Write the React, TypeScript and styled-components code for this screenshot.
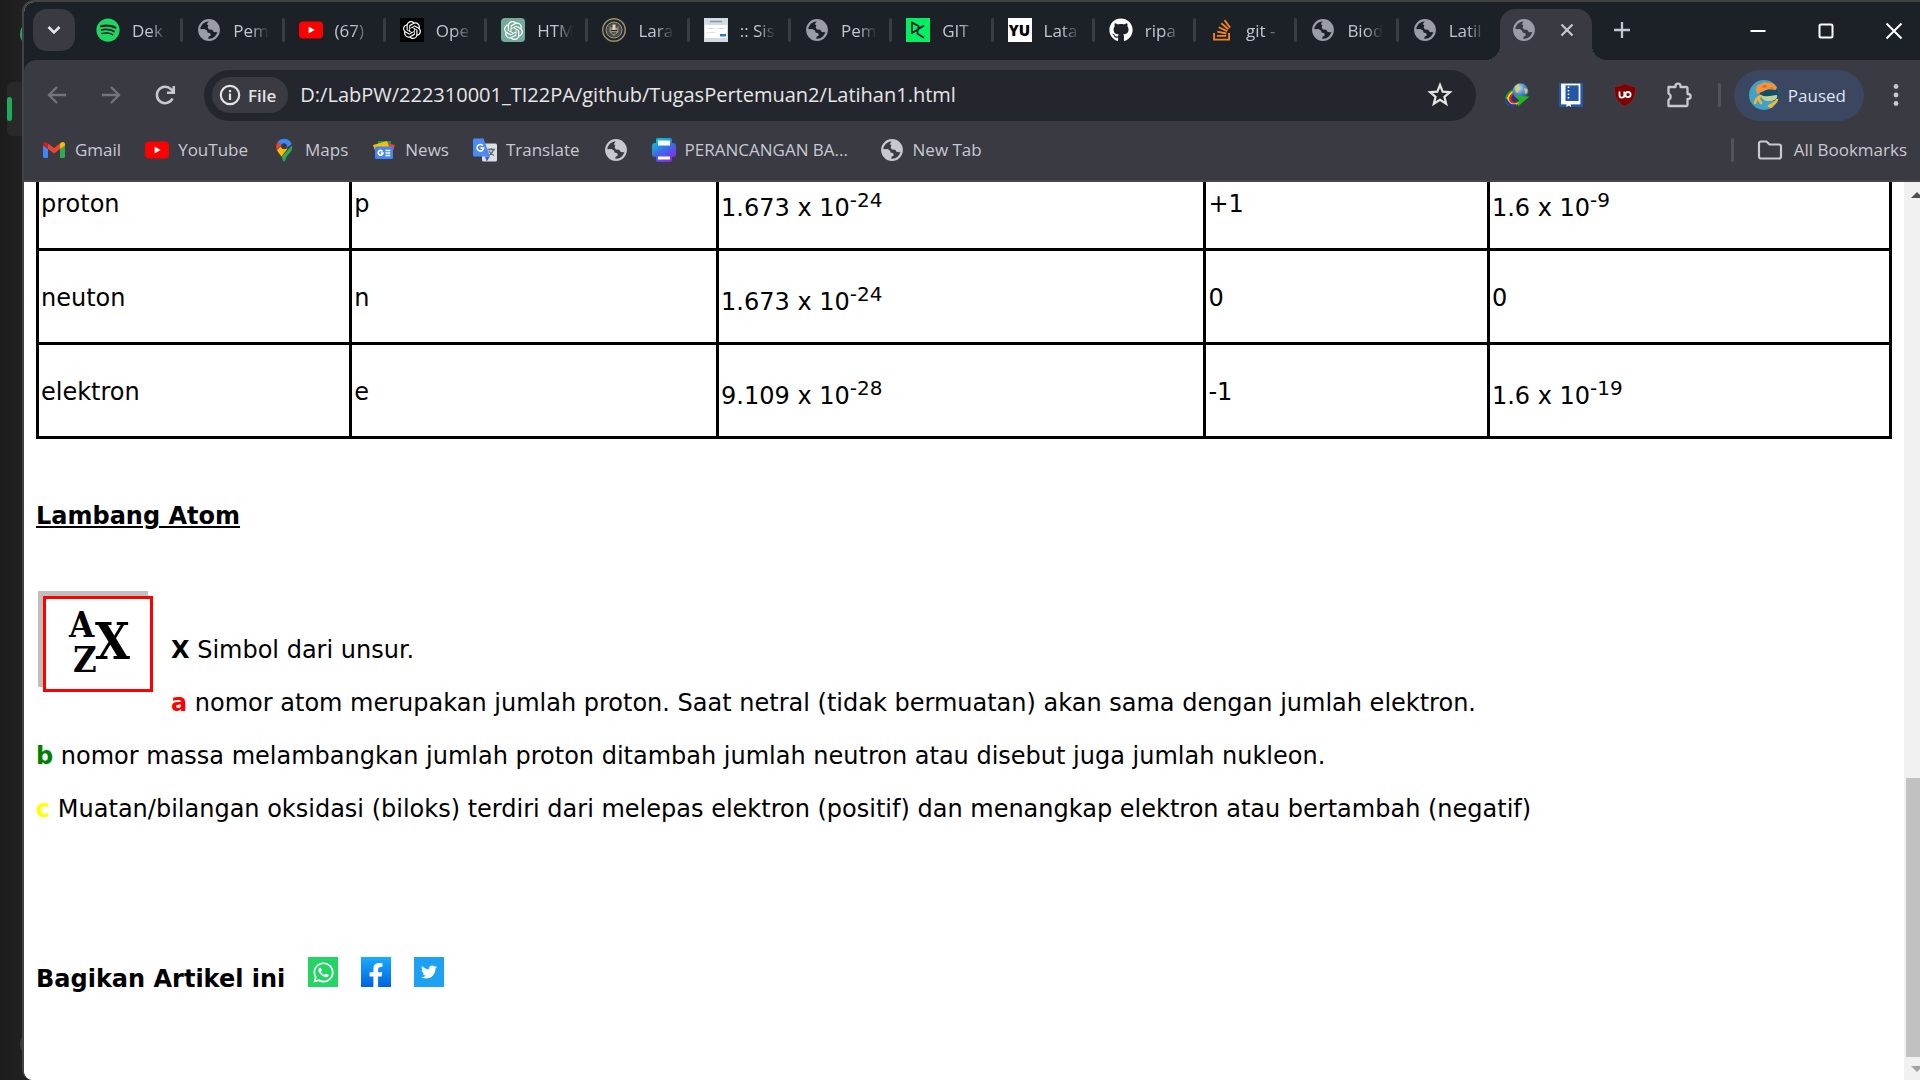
import React from "react";
import styled, { createGlobalStyle } from "styled-components";
import { FaSpotify, FaGithub, FaStackOverflow, FaWhatsapp, FaFacebookF, FaTwitter } from "react-icons/fa";
import { SiOpenai } from "react-icons/si";

const Global = createGlobalStyle`
  * { box-sizing: border-box; }
  html, body, #root { height: 100%; margin: 0; }
  body { overflow: hidden; background: #1e1e1e; }
  button { border: 0; padding: 0; background: none; color: inherit; font: inherit; display: flex; align-items: center; justify-content: center; }
  a { color: inherit; text-decoration: none; }
  svg { display: block; flex: none; }
`;

const ui = `"Segoe UI", "Open Sans", "Noto Sans", sans-serif`;
const text = `Verdana, "DejaVu Sans", sans-serif`;

const Desktop = styled.div`position: relative; display: flex; height: 100vh; padding-left: 22px; background: linear-gradient(90deg, #1c1c1c, #212121 22px); overflow: hidden;`;
const BehindPanel = styled.div`position: absolute; left: 7px; top: 82px; width: 40px; height: 54px; border-radius: 6px; background: #292929; display: flex; align-items: center;`;
const BehindMark = styled.div`width: 5px; height: 24px; border-radius: 3px; background: #1fab5c;`;
const BehindDot = styled.div<{ $top: number; $color: string }>`position: absolute; left: 20px; top: ${p => p.$top}px; width: 26px; height: 26px; border-radius: 50%; background: ${p => p.$color};`;

const Window = styled.div`position: relative; flex: 1; min-width: 0; display: flex; flex-direction: column; border: 2px solid #434343; border-right: 0; border-bottom: 0; border-radius: 12px 0 0 10px; overflow: hidden; background: #fff; font-family: ${ui};`;

const TabStrip = styled.div`flex: none; display: flex; align-items: flex-start; height: 58px; padding: 7px 0 0 9px; background: #1c2027; color: #c3c6cf;`;
const SearchTabs = styled.button`&& { width: 42px; height: 42px; border-radius: 14px; background: #393a42; margin-right: 7px; color: #e6e6ea; }`;
const TabList = styled.div`flex: 0 1 1418px; min-width: 0; display: flex;`;
const Tab = styled.button`&& { flex: 1 1 0; min-width: 0; height: 42px; padding-left: 14px; justify-content: flex-start; gap: 12px; font-size: 17px; line-height: 24px; }`;
const TabTitle = styled.span`flex: 1; text-align: left; white-space: nowrap; overflow: hidden; padding-top: 2px; mask-image: linear-gradient(90deg, #000 18px, transparent 36px);`;
const TabRule = styled.span<{ $hide?: boolean }>`width: 3px; height: 24px; border-radius: 2px; background: ${p => (p.$hide ? "transparent" : "#393c43")};`;
const ActiveTab = styled.div`position: relative; flex: none; width: 92px; height: 51px; padding: 0 18px 9px 12px; display: flex; align-items: center; justify-content: space-between; border-radius: 15px 15px 0 0; background: #393a42;
  &::before, &::after { content: ""; position: absolute; bottom: 0; width: 15px; height: 15px; }
  &::before { left: -15px; background: radial-gradient(circle at 0 0, transparent 15px, #393a42 15px); }
  &::after { right: -15px; background: radial-gradient(circle at 100% 0, transparent 15px, #393a42 15px); }`;
const NewTab = styled.button`&& { width: 42px; height: 42px; margin-left: 9px; }`;
const Controls = styled.div`margin-left: auto; display: flex; color: #fff;`;
const Control = styled.button`&& { width: 68px; height: 44px; &:last-child { width: 60px; padding-left: 8px; } }`;

const Toolbar = styled.div`flex: none; display: flex; align-items: center; height: 70px; padding: 0 3px 0 6px; background: #393a42; border-radius: 12px 0 0 0; color: #c7c9d1;`;
const ToolbarBack = styled.div`flex: none; background: #1c2027;`;
const NavButton = styled.button<{ $dim?: boolean }>`&& { width: 54px; height: 42px; color: ${p => (p.$dim ? "#74757c" : "#c7c9d1")}; &:nth-child(3) { margin-right: 12px; } }`;
const Omnibox = styled.div`flex: 1; min-width: 0; display: flex; align-items: center; height: 51px; padding: 0 23px 0 8px; border-radius: 26px; background: #24262d; color: #e3e3e3;`;
const Chip = styled.button`&& { height: 36px; padding: 0 12px 0 6px; gap: 6px; border-radius: 18px; background: #393a42; font-size: 17px; font-weight: 600; margin-right: 12px; }`;
const Url = styled.input`flex: 1; min-width: 0; border: 0; outline: 0; padding: 0; background: none; color: #e6e6e6; font: 20px/28px ${ui};`;
const Extensions = styled.div`display: flex; align-items: center; padding-left: 14px;`;
const Extension = styled.button`&& { width: 54px; height: 42px; }`;
const Rule = styled.span<{ $left: number; $right: number }>`width: 3px; height: 24px; border-radius: 2px; background: #52545c; margin: 0 ${p => p.$right}px 0 ${p => p.$left}px;`;
const Profile = styled.button`&& { height: 51px; padding: 0 18px 0 15px; gap: 9px; border-radius: 26px; background: #3b4660; color: #dfe3f0; font-size: 17px; }`;
const Menu = styled.button`&& { width: 42px; height: 42px; margin-left: 11px; }`;

const Bookmarks = styled.nav`flex: none; display: flex; align-items: center; gap: 24px; height: 52px; padding: 0 13px 10px 18px; border-bottom: 2px solid #474747; background: #393a42; color: #c7c9d1; font-size: 17px; line-height: 24px;`;
const Bookmark = styled.a<{ $long?: boolean }>`display: flex; align-items: center; gap: 9px; white-space: nowrap; min-width: ${p => (p.$long ? 204 : 0)}px;`;
const AllBookmarks = styled.div`margin-left: auto; display: flex; align-items: center;`;

const Viewport = styled.div`flex: 1; min-height: 0; display: flex;`;
const Page = styled.main`flex: 1; min-width: 0; padding: 0 12px; overflow: hidden; background: #fff; color: #000; font: 24px/29px ${text};`;
const ScrollTrack = styled.div`flex: 0 0 16px; overflow: hidden; display: flex; flex-direction: column; padding: 10px 0 8px 2px; background: #f1f1f1;`;
const ScrollSpace = styled.div`flex: 1;`;
const ScrollThumb = styled.div`height: 279px; margin-bottom: 9px; background: #c1c1c1;`;

const DataTable = styled.table`width: 100%; margin-top: -28px; border-collapse: collapse; table-layout: fixed;`;
const Cell = styled.td`height: 94px; padding: 4px 2px 0; border: 3px solid #000; vertical-align: middle;
  sup { font-size: 20px; line-height: 26px; }`;
const Col = styled.col<{ $share: number }>`width: ${p => p.$share}%;`;
const Heading = styled.h3`margin: 63px 0 0; font-size: 24px; line-height: 29px; text-decoration: underline;`;
const Formula = styled.figure`float: left; width: 110px; height: 96px; margin: 65px 18px 0 7px; border: 3px solid #fe0000; background: #fff; box-shadow: -5px -5px 0 #bfbfbf;`;
const Lines = styled.section`p { margin: 0 0 24px; } p:first-of-type { padding-top: 105px; }`;
const Key = styled.b<{ $color: string }>`color: ${p => p.$color};`;
const Share = styled.footer`display: flex; align-items: flex-end; gap: 23px; padding-top: 109px; font-weight: bold;`;
const ShareLabel = styled.span`line-height: 29px; margin-bottom: -7px;`;
const ShareLink = styled.a<{ $bg: string }>`display: flex; align-items: center; justify-content: center; width: 30px; height: 30px; background: ${p => p.$bg}; color: #fff;`;
const FbMark = styled(FaFacebookF)`align-self: flex-end;`;

const Box = styled.span<{ $bg: string; $r?: number }>`flex: none; display: flex; align-items: center; justify-content: center; width: 24px; height: 24px; background: ${p => p.$bg}; border-radius: ${p => p.$r || 0}px; color: #fff;`;
const YuBox = styled(Box)`color: #000; font: 900 15px/24px "Open Sans", sans-serif;`;

const Globe = ({ color = "#9a9da6" }: { color?: string }) => (
  <svg width="24" height="24" viewBox="0 0 24 24">
    <circle cx="12" cy="12" r="9.8" fill="none" stroke={color} strokeWidth="2.2" />
    <path fill={color} d="M12.5 2 17 3.5l4.5 5 .5 4.5-2.2 1.2-3-.2-1.6-2.2-3.2-.4-1.400-2 .8-2.200-1.600-.9 1.300-2.200zM2 11.200l5.400-.2 2.600 1.400.6 2 2.600.8.6 2.200-2.200 1.400-.6 3-3.600-.2L3 17.400z" />
  </svg>
);
const YouTubeIcon = () => (
  <svg width="24" height="24" viewBox="0 0 24 24"><rect x="0" y="3.500" width="24" height="17" rx="4" fill="#f00" /><path d="M9.600 8.600v6.800l6-3.400z" fill="#fff" /></svg>
);
const SpotifyIcon = styled(FaSpotify)`color: #1ed760;`;
const StackIcon = styled(FaStackOverflow)`color: #f48024;`;
const GithubIcon = styled(FaGithub)`color: #fff;`;
const Crest = () => (
  <svg width="24" height="24" viewBox="0 0 24 24"><circle cx="12" cy="12" r="11.300" fill="#1a2a3c" stroke="#a58c5c" strokeWidth="1.400" /><circle cx="12" cy="12" r="8" fill="#4b4a45" stroke="#a99768" /><path d="M7.500 7.500 9 9.500l6 .2 1.500-2.200V14L12 18l-4.500-4z" fill="#8f8b80" /><path d="M10.500 6.500h3v6h-3z" fill="#d8d3c5" /><path stroke="#24241f" strokeWidth="1.200" d="M9 12.500h6M10 15h4" /></svg>
);
const FormIcon = () => (
  <svg width="24" height="24" viewBox="0 0 24 24"><path fill="#d5dbe5" d="M0 0h24v24H0z" /><path fill="#fff" d="M1 7h22v13H1z" /><path stroke="#8f959d" strokeWidth="1.500" d="M6 3.500h12" /><path stroke="#dde1e6" d="M3 10.500h8M13 10.500h8M3 14.500h8" /><path fill="#2a7ab8" d="M16 16h6v2.500h-6z" /></svg>
);
const DcIcon = () => (
  <svg width="24" height="24" viewBox="0 0 24 24"><path fill="#03ef62" d="M0 0h24v24H0z" /><path fill="none" stroke="#05192d" strokeWidth="1.700" d="M6 16V4.500l6.500 3.600v3.200L6 15M18 7.500l-6.500 4v4.200l6.500 4M11.500 12.500l1-1.500" /></svg>
);
const GmailIcon = () => (
  <svg width="24" height="24" viewBox="0 0 24 24"><path fill="#4285f4" d="M1 7v11.500C1 19.300 1.700 20 2.500 20H6V11z" /><path fill="#34a853" d="M23 7v11.500c0 .8-.7 1.500-1.500 1.500H18V11z" /><path fill="#ea4335" d="M6 5.500 12 10l6-4.500V11l-6 4.600L6 11z" /><path fill="#c5221f" d="M1 6.500C1 4 3.600 3.600 5 4.700l1 .8V11L1 7.400z" /><path fill="#fbbc04" d="M23 6.500c0-2.500-2.600-2.900-4-1.800l-1 .8V11l5-3.600z" /></svg>
);
const MapsIcon = () => (
  <svg width="24" height="24" viewBox="0 0 24 24"><path fill="#34a853" d="M20 7.500c.8 5.500-2.500 7.500-5 10.700-1.600 2-1.700 5.300-3 5.300-1.200 0-1.200-3-2.400-4.700z" /><path fill="#fbbc04" d="m5 12 4-3.500 6.500 2.300-6 7.700C8 16.400 6 14.700 5 12z" /><path fill="#ea4335" d="M6 3.500 10 7l-5 5.500C3.500 9 4 6 6 3.500z" /><path fill="#4285f4" d="M6 3.400C9.500-.8 17.500-.2 19.700 6L14 10.500 9 8z" /><circle cx="12" cy="8.200" r="3" fill="#393a42" /></svg>
);
const NewsIcon = () => (
  <svg width="24" height="24" viewBox="0 0 24 24"><path fill="#0c9d58" d="M6 3h13v9H6z" /><path fill="#ea4335" d="m15 5 8 2-3 9-7-4z" /><path fill="#fbbc04" d="m1 7 14-4 3 8-13 7z" /><rect x="3" y="8.500" width="18" height="12.500" rx="1.500" fill="#4285f4" /><path fill="none" stroke="#fff" strokeWidth="1.700" d="M10.600 13.400a2.400 2.400 0 1 0 .4 1.800H8.800M13.500 12.500h4.800M13.500 15h4.800M13.500 17.500h4.800" /></svg>
);
const TranslateIcon = () => (
  <svg width="24" height="24" viewBox="0 0 24 24"><rect x="9" y="5.500" width="15" height="18" rx="1.500" fill="#dcdee0" /><path fill="none" stroke="#5f6b73" strokeWidth="1.300" d="M14.500 11.500h7.500M18.200 10v1.500M20.600 11.500c-.7 3-2.600 4.600-4.600 6M16 13c1 2.200 2.800 3.700 5 4.500" /><path fill="#3a5bc7" d="m12 18.500 5 0-3.400 5z" /><path fill="#4c8bf5" d="M1.500.500h9L17 18.500H1.500A1.500 1.500 0 0 1 0 17V2A1.500 1.500 0 0 1 1.500.500z" /><path fill="none" stroke="#fff" strokeWidth="1.600" d="M9.800 7.600a3.300 3.300 0 1 0 .8 2.500H7.500" /></svg>
);
const PrinterIcon = () => (
  <svg width="24" height="24" viewBox="0 0 24 24"><defs><linearGradient id="pr" x1="0.200" y1="0" x2="0.800" y2="1"><stop offset="0" stopColor="#00d0cd" /><stop offset=".5" stopColor="#3f68ea" /><stop offset="1" stopColor="#8a24e8" /></linearGradient></defs><path fill="url(#pr)" d="M6 0h12a2 2 0 0 1 2 2v3h1a3 3 0 0 1 3 3v8a3 3 0 0 1-3 3h-1v3a2 2 0 0 1-2 2H6a2 2 0 0 1-2-2v-3H3a3 3 0 0 1-3-3V8a3 3 0 0 1 3-3h1V2a2 2 0 0 1 2-2z" /><path fill="#fff" d="M6 2.500h12v5H6zM6 18.500h12v3H6z" /></svg>
);
const FolderIcon = () => (
  <svg width="28" height="24" viewBox="0 0 28 24" fill="none" stroke="#c7c9d1" strokeWidth="2.200"><path d="M2 5.500A2 2 0 0 1 4 3.500h5.500l3 3H22a2 2 0 0 1 2 2v10a2 2 0 0 1-2 2H4a2 2 0 0 1-2-2z" /></svg>
);
const IdmIcon = () => (
  <svg width="26" height="24" viewBox="0 0 26 24">
    <defs><radialGradient id="ball" cx=".4" cy=".3" r=".8"><stop offset="0" stopColor="#b8dcf8" /><stop offset=".5" stopColor="#4a86d0" /><stop offset="1" stopColor="#1c3f86" /></radialGradient></defs>
    <g transform="rotate(-35 11 13)"><ellipse cx="10" cy="14" rx="10.500" ry="8" fill="#2a9b1e" /><ellipse cx="10.500" cy="14.300" rx="9" ry="6.800" fill="#f2d21c" /><ellipse cx="11" cy="14.500" rx="7.500" ry="5.600" fill="#e02b1b" /><ellipse cx="11.500" cy="15" rx="5.800" ry="4.300" fill="#2b2f8c" /></g>
    <path d="M2 16c1 5 6 7.500 10 6" fill="none" stroke="#1c35c4" strokeWidth="2.400" />
    <circle cx="16.500" cy="8.300" r="8" fill="url(#ball)" /><path fill="#d9d35e" opacity=".9" d="M10.500 5c1-2.600 3-4 5-4.200l-.6 3 1.600 2-3.500 4.500zM20 5l3.500 1v4l-2.500 1z" />
    <path fill="#25b51e" d="m10 12.500 15.500 1L14 23.500l.8-6.500z" />
  </svg>
);
const BookIcon = () => (
  <svg width="24" height="24" viewBox="0 0 24 24"><path fill="#2457a5" d="M0 0h24v24H0z" /><rect x="3" y="1.500" width="17.500" height="19" fill="none" stroke="#fff" strokeWidth="1.800" /><path fill="#fff" d="M3 2h3.500v18H3zM3 18h17v2H3zM7.500 19h4.500v5l-2.200-1.600L7.500 24z" /><path stroke="#fff" strokeWidth="1.600" strokeDasharray="1.500 2" d="M9.500 3.500v12" /></svg>
);
const UblockIcon = () => (
  <svg width="24" height="24" viewBox="0 0 24 24"><path fill="#800000" stroke="#6e3f46" strokeWidth=".6" d="M12 .500c3 2 7 3 10.500 3 .3 9-1 14.500-10.500 20C2.500 18 1.200 12.500 1.500 3.500 5 3.500 9 2.500 12 .500z" /><path fill="none" stroke="#fff" strokeWidth="1.800" d="M6.500 8.500v3.700a2.300 2.300 0 0 0 4.800 0V8.500" /><circle cx="15" cy="11.600" r="2.600" fill="none" stroke="#fff" strokeWidth="1.800" /></svg>
);
const PuzzleIcon = () => (
  <svg width="26" height="26" viewBox="0 0 26 26"><path fill="none" stroke="#c7c9d1" strokeWidth="2.300" strokeLinejoin="round" d="M2.500 5h7V4.200a2.500 2.500 0 0 1 5 0V5h5.500a1.500 1.500 0 0 1 1.500 1.500V12h.7a2.300 2.300 0 0 1 0 4.800h-.7v5.700a1.500 1.500 0 0 1-1.500 1.500H2.500v-6.200a3.400 3.400 0 0 0 0-6.300z" /></svg>
);
const FrogAvatar = () => (
  <svg width="30" height="30" viewBox="0 0 30 30"><clipPath id="av"><circle cx="15" cy="15" r="15" /></clipPath><g clipPath="url(#av)"><path fill="#3fa3c8" d="M0 0h30v30H0z" /><path fill="#12506a" d="M10 11l20-3v12l-6 1-12-4z" /><path fill="#f5923a" d="M7 10c0-4 3-6 5-6 2-2 5-2 6-1 4-1 7 0 10 3l-1 4-8-1-6 3-5 2z" /><path fill="#e8623a" d="M13 6l4-1 1 2-4 1zM21 7l4 1-3 1z" /><path fill="#c7cf98" d="M12 15c6 3 11 0 16 0 1 4-3 6-8 6-4 0-8-2-8-6z" /><path fill="none" stroke="#f7b43a" strokeWidth="2.600" strokeLinecap="round" d="M12 16c-3 1-5 3-6 7M9 18l3 5M28 20c-1 3-4 4-8 6M25 23l-3 4" /></g></svg>
);

const tabs: { title: string; icon: React.ReactNode }[] = [
  { title: "Dek", icon: <SpotifyIcon size={24} /> },
  { title: "Pem", icon: <Globe /> },
  { title: "(67)", icon: <YouTubeIcon /> },
  { title: "Ope", icon: <Box $bg="#000"><SiOpenai size={18} /></Box> },
  { title: "HTM", icon: <Box $bg="#75a99b" $r={4}><SiOpenai size={19} /></Box> },
  { title: "Lara", icon: <Crest /> },
  { title: ":: Sis", icon: <FormIcon /> },
  { title: "Pem", icon: <Globe /> },
  { title: "GIT", icon: <DcIcon /> },
  { title: "Lata", icon: <YuBox $bg="#fff">YU</YuBox> },
  { title: "ripa", icon: <GithubIcon size={24} /> },
  { title: "git -", icon: <StackIcon size={24} /> },
  { title: "Biod", icon: <Globe /> },
  { title: "Latil", icon: <Globe /> },
];

const bookmarks: { title: string; icon: React.ReactNode; long?: boolean }[] = [
  { title: "Gmail", icon: <GmailIcon /> },
  { title: "YouTube", icon: <YouTubeIcon /> },
  { title: "Maps", icon: <MapsIcon /> },
  { title: "News", icon: <NewsIcon /> },
  { title: "Translate", icon: <TranslateIcon /> },
  { title: "", icon: <Globe color="#c7c9d1" /> },
  { title: "PERANCANGAN BA...", icon: <PrinterIcon />, long: true },
  { title: "New Tab", icon: <Globe color="#c7c9d1" /> },
];

const columnShares = [16.9, 19.8, 26.3, 15.3, 21.7];

const rows = [
  ["proton", "p", "1.673 x 10", "-24", "+1", "1.6 x 10", "-9"],
  ["neuton", "n", "1.673 x 10", "-24", "0", "0", ""],
  ["elektron", "e", "9.109 x 10", "-28", "-1", "1.6 x 10", "-19"],
];

const Stroke = ({ d, size = 24, w = 2 }: { d: string; size?: number; w?: number }) => (
  <svg width={size} height={size} viewBox={`0 0 ${size} ${size}`} fill="none" stroke="currentColor" strokeWidth={w}><path d={d} /></svg>
);

export default function App() {
  return (
    <Desktop>
      <Global />
      <BehindPanel><BehindMark /></BehindPanel>
      <BehindDot $top={21} $color="#25a75b" />
      <BehindDot $top={1031} $color="#3a3a3a" />
      <Window>
        <TabStrip>
          <SearchTabs aria-label="Search tabs"><Stroke d="M6.500 9l5.500 5.500L17.500 9" w={2.600} /></SearchTabs>
          <TabList>
            {tabs.map((t, i) => (
              <Tab key={i}>{t.icon}<TabTitle>{t.title}</TabTitle><TabRule $hide={i === tabs.length - 1} /></Tab>
            ))}
          </TabList>
          <ActiveTab><Globe /><button aria-label="Close tab"><Stroke size={14} d="M1.500 1.500l11 11M12.500 1.500l-11 11" w={2.300} /></button></ActiveTab>
          <NewTab aria-label="New tab"><Stroke d="M12 4v16M4 12h16" w={2.300} /></NewTab>
          <Controls>
            <Control aria-label="Minimize"><Stroke d="M4.500 12h15" /></Control>
            <Control aria-label="Maximize"><Stroke d="M7 5.500h10a1.500 1.500 0 0 1 1.500 1.500v10a1.500 1.500 0 0 1-1.500 1.500H7a1.500 1.500 0 0 1-1.500-1.500V7A1.500 1.500 0 0 1 7 5.500z" /></Control>
            <Control aria-label="Close"><Stroke d="M4.500 4.500l15 15M19.500 4.500l-15 15" /></Control>
          </Controls>
        </TabStrip>
        <ToolbarBack>
          <Toolbar>
            <NavButton $dim aria-label="Back"><Stroke d="M21 12H4M12 4l-8 8 8 8" w={2.300} /></NavButton>
            <NavButton $dim aria-label="Forward"><Stroke d="M3 12h17M12 4l8 8-8 8" w={2.300} /></NavButton>
            <NavButton aria-label="Reload"><Stroke d="M19.500 15.500A8.200 8.200 0 1 1 18 6.200L20.500 9M20.800 3v6.800H14" w={2.500} /></NavButton>
            <Omnibox>
              <Chip><Stroke d="M12 2.800a9.200 9.200 0 1 0 0 18.400a9.200 9.200 0 1 0 0-18.400zM12 10.500v6.500M12 7v2.300" w={2.200} />File</Chip>
              <Url aria-label="Address" defaultValue="D:/LabPW/222310001_TI22PA/github/TugasPertemuan2/Latihan1.html" />
              <button aria-label="Bookmark this page"><Stroke size={26} d="M13 3l2.700 6.700 7.200.5-5.500 4.600 1.800 7L13 17.900l-6.200 3.900 1.800-7-5.500-4.600 7.200-.5z" w={2.200} /></button>
            </Omnibox>
            <Extensions>
              <Extension aria-label="Download manager"><IdmIcon /></Extension>
              <Extension aria-label="Notebook"><BookIcon /></Extension>
              <Extension aria-label="Ad blocker"><UblockIcon /></Extension>
              <Extension aria-label="Extensions"><PuzzleIcon /></Extension>
            </Extensions>
            <Rule $left={12} $right={13} />
            <Profile><FrogAvatar />Paused</Profile>
            <Menu aria-label="Menu"><svg width="6" height="24" viewBox="0 0 6 24" fill="currentColor"><circle cx="3" cy="3.500" r="2.400" /><circle cx="3" cy="12" r="2.400" /><circle cx="3" cy="20.500" r="2.400" /></svg></Menu>
          </Toolbar>
        </ToolbarBack>
        <Bookmarks>
          {bookmarks.map((b, i) => (
            <Bookmark key={i} href="#" $long={b.long} aria-label={b.title || "Site"}>{b.icon}{b.title}</Bookmark>
          ))}
          <AllBookmarks><Rule $left={0} $right={23} /><Bookmark href="#"><FolderIcon />All Bookmarks</Bookmark></AllBookmarks>
        </Bookmarks>
        <Viewport>
          <Page>
            <DataTable>
              <colgroup>{columnShares.map((s, i) => <Col key={i} $share={s} />)}</colgroup>
              <tbody>
                {rows.map(r => (
                  <tr key={r[0]}>
                    <Cell>{r[0]}</Cell><Cell>{r[1]}</Cell><Cell>{r[2]}<sup>{r[3]}</sup></Cell><Cell>{r[4]}</Cell><Cell>{r[5]}{r[6] && <sup>{r[6]}</sup>}</Cell>
                  </tr>
                ))}
              </tbody>
            </DataTable>
            <Heading>Lambang Atom</Heading>
            <Lines>
              <Formula>
                <svg width="104" height="90" viewBox="0 0 104 90" fontFamily="'DejaVu Serif Condensed', 'DejaVu Serif', 'Liberation Serif', serif" fontWeight="bold">
                  <text x="23" y="38" fontSize="36">A</text><text x="27" y="73" fontSize="36">Z</text><text x="49" y="60" fontSize="50">X</text>
                </svg>
              </Formula>
              <p><Key $color="#000">X</Key> Simbol dari unsur.</p>
              <p><Key $color="#f00">a</Key> nomor atom merupakan jumlah proton. Saat netral (tidak bermuatan) akan sama dengan jumlah elektron.</p>
              <p><Key $color="green">b</Key> nomor massa melambangkan jumlah proton ditambah jumlah neutron atau disebut juga jumlah nukleon.</p>
              <p><Key $color="#ff0">c</Key> Muatan/bilangan oksidasi (biloks) terdiri dari melepas elektron (positif) dan menangkap elektron atau bertambah (negatif)</p>
            </Lines>
            <Share>
              <ShareLabel>Bagikan Artikel ini</ShareLabel>
              <ShareLink href="#" aria-label="WhatsApp" $bg="#25d366"><FaWhatsapp size={23} /></ShareLink>
              <ShareLink href="#" aria-label="Facebook" $bg="linear-gradient(#18acfe, #0163e0)"><FbMark size={24} /></ShareLink>
              <ShareLink href="#" aria-label="Twitter" $bg="#1da1f2"><FaTwitter size={16} /></ShareLink>
            </Share>
          </Page>
          <ScrollTrack>
            <svg width="16" height="6" viewBox="0 0 16 6"><path d="M5 6l6-6 6 6z" fill="#505050" /></svg>
            <ScrollSpace />
            <ScrollThumb />
            <svg width="16" height="6" viewBox="0 0 16 6"><path d="M5 0h12l-6 6z" fill="#a3a3a3" /></svg>
          </ScrollTrack>
        </Viewport>
      </Window>
    </Desktop>
  );
}
